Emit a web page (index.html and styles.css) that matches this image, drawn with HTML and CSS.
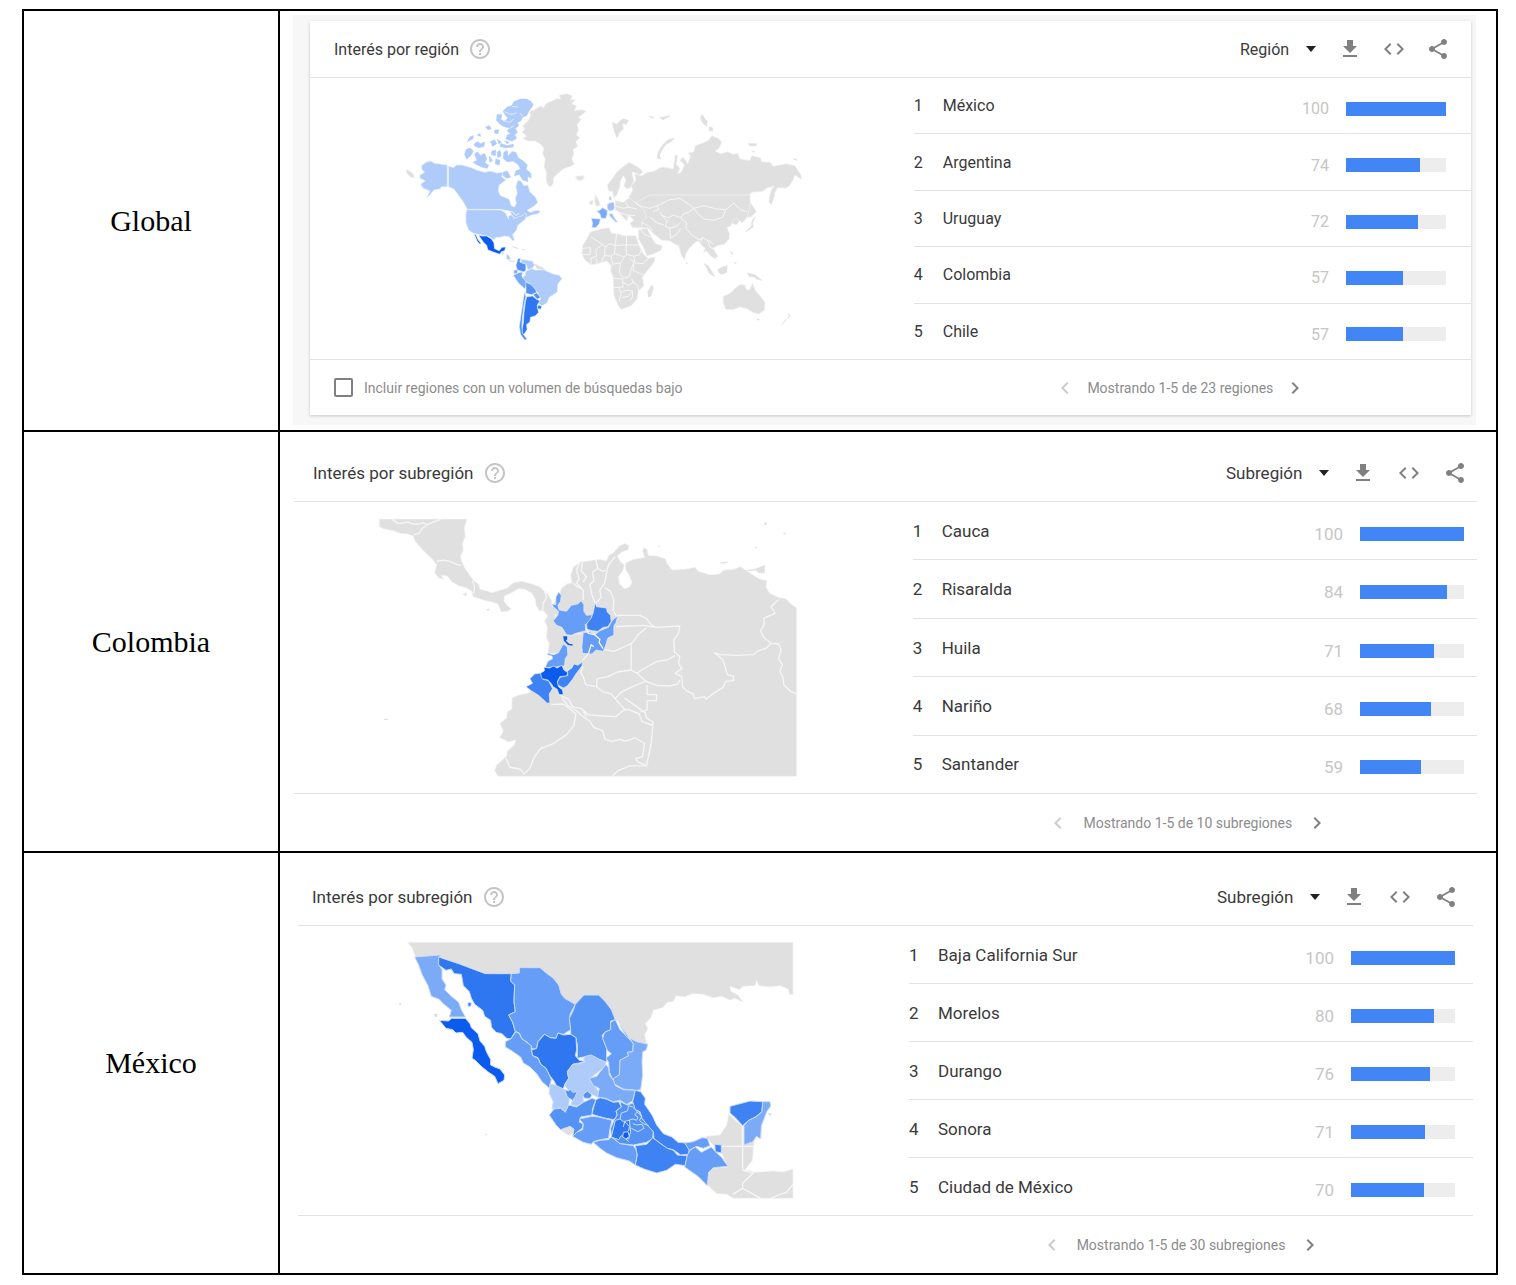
FILE: index.html
```html
<!doctype html>
<html lang="es">
<head>
<meta charset="utf-8">
<title>Interés por región y subregión</title>
<meta name="viewport" content="width=device-width,initial-scale=1">
<link rel="stylesheet" href="styles.css">
</head>
<body>

<!-- shared icons -->
<svg class="sprite" aria-hidden="true">
  <symbol id="i-help" viewBox="0 0 24 24"><path d="M11 18h2v-2h-2v2zm1-16C6.480 2 2 6.480 2 12s4.480 10 10 10 10-4.480 10-10S17.520 2 12 2zm0 18c-4.410 0-8-3.590-8-8s3.590-8 8-8 8 3.590 8 8-3.590 8-8 8zm0-14c-2.210 0-4 1.790-4 4h2c0-1.100.9-2 2-2s2 .9 2 2c0 2-3 1.750-3 5h2c0-2.250 3-2.500 3-5 0-2.210-1.790-4-4-4z"/></symbol>
  <symbol id="i-down" viewBox="0 0 10 6"><path d="M0 0h10L5 6z"/></symbol>
  <symbol id="i-download" viewBox="0 0 24 24"><path d="M19 9h-4V3H9v6H5l7 7 7-7zM5 18v2h14v-2H5z"/></symbol>
  <symbol id="i-code" viewBox="0 0 24 24"><path d="M9.400 16.600L4.800 12l4.600-4.600L8 6l-6 6 6 6 1.400-1.400zm5.200 0l4.600-4.600-4.600-4.600L16 6l6 6-6 6-1.400-1.400z"/></symbol>
  <symbol id="i-share" viewBox="0 0 24 24"><path d="M18 16.080c-.76 0-1.440.3-1.960.77L8.910 12.700c.05-.23.09-.46.09-.7s-.04-.47-.09-.7l7.050-4.110c.54.5 1.250.81 2.040.81 1.660 0 3-1.340 3-3s-1.340-3-3-3-3 1.340-3 3c0 .24.04.47.09.7L8.040 9.810C7.500 9.310 6.790 9 6 9c-1.660 0-3 1.340-3 3s1.340 3 3 3c.79 0 1.500-.31 2.040-.81l7.120 4.160c-.05.21-.08.43-.08.65 0 1.610 1.310 2.920 2.920 2.920s2.920-1.310 2.920-2.920-1.310-2.920-2.920-2.920z"/></symbol>
  <symbol id="i-prev" viewBox="0 0 24 24"><path d="M15.410 7.410L14 6l-6 6 6 6 1.410-1.410L10.830 12z"/></symbol>
  <symbol id="i-next" viewBox="0 0 24 24"><path d="M10 6L8.590 7.410 13.170 12l-4.580 4.590L10 18l6-6z"/></symbol>
</svg>

<table class="report">
  <tr>
    <th scope="row">Global</th>
    <td>
      <div class="frame">
      <section class="panel panel-global">
        <header class="panel-head">
          <h2>Interés por región</h2>
          <button type="button" class="icon help" aria-label="Ayuda"><svg><use href="#i-help"/></svg></button>
          <div class="picker">
            <select aria-label="Nivel"><option>Región</option></select>
            <svg class="caret"><use href="#i-down"/></svg>
          </div>
          <div class="tools">
            <button type="button" class="icon" aria-label="Descargar"><svg><use href="#i-download"/></svg></button>
            <button type="button" class="icon" aria-label="Insertar"><svg><use href="#i-code"/></svg></button>
            <button type="button" class="icon" aria-label="Compartir"><svg><use href="#i-share"/></svg></button>
          </div>
        </header>
        <div class="panel-body">
          <svg class="map world" viewBox="-240 -21 1812 843" role="img" aria-label="Mapa mundial">
            <!-- North America, arctic -->
            <g class="c2">
              <path d="M95 242L108 232 122 228 135 235 172 240V305L155 305 150 312 132 315 124 325 110 340 120 318 100 310 92 298 106 287 90 280 90 270 104 262 95 252Z"/>
              <path d="M176 243L190 248 200 240 215 240 230 244 245 248 262 256 285 262 300 258 322 264 340 262 335 275 348 285 328 300 325 318 332 332 358 343 364 362 374 366 379 356 376 340 382 325 378 305 384 285 395 290 402 302 414 300 420 320 436 335 444 352 434 362 412 376 420 382 440 376 452 378 445 386 425 390 408 398 396 394 384 404 372 398 358 378 330 373H232L220 350 205 330 192 312 176 305Z"/>
              <path class="isles" d="M230 192L242 190 250 198 242 212 230 222 224 208ZM254 208L262 200 272 212 284 205 290 222 284 234 296 240 292 250 276 246 262 240 250 232 262 226ZM306 198L318 196 316 212 304 208ZM318 222L330 226 328 240 316 236ZM322 202L330 196 334 212 324 218ZM342 202L352 196 354 214 366 200 378 202 384 218 400 228 412 240 408 252 422 264 424 278 412 274 414 290 398 284 388 268 374 272 378 258 392 252 386 240 370 228 352 230 340 220Z"/>
              <path class="isles" d="M232 170L240 156 250 152 248 162 238 166ZM252 178L262 170 272 176 284 172 282 184 266 188 256 184ZM288 126L298 122 304 130 294 134ZM314 136L326 134 324 146 314 144ZM262 150L270 146 272 154ZM302 170L314 164 320 176 308 184ZM330 184L334 176 352 182 370 178 370 186 346 188ZM340 262L352 258 362 276 350 280 340 272ZM322 162L334 172 328 178ZM262 222L276 226 288 236 268 238ZM298 214L308 226 300 232ZM344 168L358 172 352 176Z"/>
              <path class="isles" d="M340 78L352 66 366 62 372 50 392 42 410 42 424 50 430 60 418 76 410 92 398 96 392 108 382 112 386 122 376 130 382 142 374 150 380 160 366 168 348 162 352 150 362 146 352 138 360 128 346 126 334 120 320 106 322 88 336 90 332 104 346 108 354 98 346 90Z"/>
            </g>
            <path class="fjord" d="M344 80L362 88 380 84M338 106L358 112 372 102M360 130L372 122M366 64L384 66M398 94L390 84"/>
            <g class="c0">
              <path d="M486 48L500 40 512 42 508 30 530 26 548 32 542 44 556 44 546 56 560 62 554 76 576 74 590 78 576 90 566 96 574 104 562 118 566 134 560 150 570 158 558 170 564 184 550 194 552 206 546 222 554 238 538 246 520 252 504 266 492 276 490 296 482 306 472 298 468 280 470 262 462 246 466 222 458 206 462 190 450 176 436 168 412 168 398 160 410 154 396 142 404 134 398 122 414 108 422 92 418 80 434 74 452 62 460 68 472 52Z"/>
              <path d="M556 274L568 276 582 272 584 280 572 288 560 284ZM48 252L60 258 70 266 74 280 60 276 50 264Z"/>
            </g>
            <!-- Americas south of Canada -->
            <g transform="translate(0 345)">
              <path class="c2" d="M230 29L330 30 346 36 352 50 366 44 372 56 386 50 396 48 404 40 410 42 406 58 396 66 384 76 380 90 368 104 374 120 368 122 358 110 344 108 330 112 318 112 312 120 302 112 290 108 265 103 250 100 236 90 228 68 228 45Z"/>
              <path class="line" d="M340 34L352 40 356 58M352 38L366 34 378 46 388 40"/>
              <path class="c9" d="M266 106L278 108 290 108 304 116 312 128 314 146 328 152 336 142 348 141 344 152 334 156 330 163 312 157 294 150 290 136 280 126ZM253 103L258 104 264 118 273 130 270 133 262 124Z"/>
              <path class="c2" d="M348 164L358 166 362 178 352 180ZM334 156L342 158 338 164Z"/>
              <path class="c0 isles" d="M358 182L374 184 372 186ZM368 140L382 144 384 146ZM396 148L404 149 402 150ZM434 192L460 204 464 210 442 206Z"/>
              <path class="c6" d="M384 176L392 174 390 186 408 192 408 210 402 216 382 210 378 196Z"/>
              <path class="c2" d="M394 178L410 180 428 184 434 196 426 206 414 210 408 192 394 188Z"/>
              <path class="c4" d="M372 210L384 210 382 220 372 222Z"/>
              <path class="c4" d="M370 226L386 218 398 216 396 230 408 240 410 256 404 266 386 250Z"/>
              <path class="c2" d="M408 214L426 206 436 210 464 210 476 216 490 222 508 226 516 236 504 252 502 276 488 286 478 292 472 308 456 318 446 310 452 296 442 276 430 268 424 256 408 244 398 232 406 226Z"/>
              <path class="c6" d="M408 246L424 254 438 270 440 278 424 284 408 280ZM430 284L440 278 452 292 442 298Z"/>
              <path class="c8" d="M410 290L428 288 440 298 450 302 442 316 446 338 436 348 422 352 420 366 410 374 412 388 402 404 394 398 400 370 402 340 406 308Z"/>
              <path class="c6" d="M404 276L408 290 402 318 398 350 396 380 398 400 412 418 404 420 392 404 388 380 394 340 400 300Z"/>
              <path class="c8" d="M446 314L456 320 452 328 442 326Z"/>
            </g>
            <!-- Europe and Asia -->
            <g class="c0" transform="translate(540 0)">
              <path class="isles" d="M128 112L140 118 150 108 160 102 176 106 168 118 158 114 160 132 148 142 142 158 134 140ZM238 94L252 97 248 98ZM270 98L300 92 280 104ZM312 160L304 170 288 178 276 196 268 210 272 222 262 218 266 200 280 178 296 164ZM398 88L404 100 412 108 410 124 398 112 392 98ZM418 126L428 128 428 138 418 136ZM536 176L560 176 558 182 540 182ZM546 198L554 200 552 202ZM672 222L680 222 680 226Z"/>
              <path d="M112 300L128 280 140 262 158 246 178 232 190 238 210 250 220 262 208 270 194 262 186 262 192 288 184 306 172 312 162 304 168 284 160 272 152 288 150 306 142 330 132 338 128 320 116 318Z"/>
              <path d="M194 266L216 272 232 262 254 258 270 248 280 246 294 248 310 252 316 208 324 212 320 238 330 250 324 266 334 262 344 240 330 226 340 216 354 236 362 212 354 204 372 200 376 182 398 174 416 166 426 152 446 160 456 172 448 190 436 198 452 206 474 200 490 208 504 204 510 222 540 226 546 212 572 218 576 230 602 232 610 244 650 236 676 242 694 270 696 284 676 270 670 284 660 302 648 310 624 308 616 322 606 362 598 340 604 316 612 304 594 308 576 320 546 322 536 334 542 352 560 380 544 396 516 400 500 420 470 410 440 410 402 412 380 400 340 392 300 400 284 416 250 408 240 390 220 376 196 376 180 360 176 338 188 316 184 302 198 286Z"/>
              <path d="M76 328L86 344 92 362 78 364 74 350ZM60 348L70 346 68 360 58 358ZM18 274L42 272 38 284 24 286Z"/>
            </g>
            <g transform="translate(540 330)">
              <g class="c0">
                <path d="M136 16L160 22 178 8 196 22 222 34 240 40 250 60 236 68 246 88 262 98 252 108 236 100 212 98 188 98 180 84 192 76 176 60 172 78 162 70 148 52 136 44Z"/>
                <path d="M196 24L240 0H540L542 24 538 44 530 70 518 84 500 70 490 76 484 92 472 98 480 118 478 132 464 148 444 152 430 160 444 184 436 192 424 184 410 168 400 174 406 160 394 150 386 138 374 144 358 160 348 178 344 196 334 180 326 152 312 146 300 138 276 136 258 122 246 112 232 96 218 100 214 82 230 66 222 44Z"/>
                <path d="M206 104L232 100 246 128 258 146 278 152 274 166 248 178 232 184 220 156 206 132Z"/>
                <path d="M62 110L92 102 118 98 124 114 150 118 162 122 198 122 208 152 220 176 234 190 256 186 254 200 232 228 218 246 222 272 206 288 202 312 184 332 154 344 146 334 132 300 130 246 122 228 124 212 110 198 84 206 64 210 46 196 36 178 38 152 52 130Z"/>
                <path class="isles" d="M246 270L250 278 244 302 236 306 234 290ZM350 202L353 206 350 206ZM404 206L416 214 434 244 420 236ZM446 222L460 216 472 212 470 232 456 238 446 232ZM482 168L488 174 487 180ZM492 202L500 206ZM534 234L556 240 566 248 576 256 560 252 554 246 538 244ZM556 66L548 84 550 96 528 110 532 106 546 92 546 78ZM604 0L614 0 602 26 598 20Z"/>
                <path d="M460 304L482 294 500 276 512 268 526 270 530 284 540 284 548 264 558 288 572 304 586 322 584 346 566 358 548 352 532 342 512 336 490 344 468 344 460 324Z"/>
                <path class="isles" d="M562 372L569 373 566 377ZM656 356L660 362 654 370 658 364ZM650 372L644 380 636 388Z"/>
              </g>
              <path class="line" d="M196 22L214 34 240 40 262 32 266 44 250 50M262 32L300 14 330 10 358 28 372 40 356 52 340 58 332 68 310 60 296 68 276 62 272 50M372 40L402 32 440 42 468 44 460 66 432 76 402 72 384 56 372 40M468 44L492 24 512 44 530 50M332 68L350 84 348 100 368 122 388 134 398 128 414 136 430 146M276 62L292 78 286 94 300 100 320 94 332 82M300 100L302 130 320 118 334 100M240 66L262 84 282 90M214 82L236 92 248 108M168 20L174 36 202 42M140 34L160 40 178 36M148 52L170 60 196 62M398 128L392 142M414 136L420 156 432 162M212 104L224 118 242 126"/>
              <path class="line" d="M64 126L98 148 106 156 120 146 136 152 140 118M136 152L166 150H206M170 122V152M98 148L78 164 80 184 60 190M106 156L104 182 92 206M104 182L124 184 134 176 136 152M134 176L164 186 170 178 168 150M170 178L192 184 208 180 214 164M124 184L128 208 152 204 164 186M152 204L148 232 160 250 178 246 184 222 192 200 178 190M192 184L196 204 220 206 236 190M192 204L190 226 220 240M132 250L158 252 160 276 132 278M160 262L176 272 190 262 186 250M148 278L154 296 148 320M154 292L172 286 188 288 176 304 156 308M190 262L204 272 206 288M40 160L62 158 60 180 38 178M64 190V210M78 190L82 206M188 288V306L180 318"/>
              <path class="c4" d="M80 48L90 46 98 38 112 46 112 58 108 70 94 70 90 56Z"/>
              <path class="c4" d="M64 70L92 72 88 86 78 98 66 98 68 84Z"/>
              <path class="c3" d="M112 28L124 22 132 22 134 38 130 46 118 48 112 40ZM116 56L128 56 134 70 144 80 138 82 122 66ZM118 4L124 6 124 16 118 14Z"/>
            </g>
          </svg>
          <ol class="ranking">
            <li><span class="rank">1</span><span class="name">México</span><span class="value">100<span class="bar"><span style="width:100%"></span></span></span></li>
            <li><span class="rank">2</span><span class="name">Argentina</span><span class="value">74<span class="bar"><span style="width:74%"></span></span></span></li>
            <li><span class="rank">3</span><span class="name">Uruguay</span><span class="value">72<span class="bar"><span style="width:72%"></span></span></span></li>
            <li><span class="rank">4</span><span class="name">Colombia</span><span class="value">57<span class="bar"><span style="width:57%"></span></span></span></li>
            <li><span class="rank">5</span><span class="name">Chile</span><span class="value">57<span class="bar"><span style="width:57%"></span></span></span></li>
          </ol>
        </div>
        <footer class="panel-foot">
          <label class="low-volume"><input type="checkbox">Incluir regiones con un volumen de búsquedas bajo</label>
          <div class="pager">
            <button type="button" class="icon" aria-label="Anterior" disabled><svg><use href="#i-prev"/></svg></button>
            <span>Mostrando 1-5 de 23 regiones</span>
            <button type="button" class="icon" aria-label="Siguiente"><svg><use href="#i-next"/></svg></button>
          </div>
        </footer>
      </section>
      </div>
    </td>
  </tr>
  <tr>
    <th scope="row">Colombia</th>
    <td>
      <section class="panel panel-colombia">
        <header class="panel-head">
          <h2>Interés por subregión</h2>
          <button type="button" class="icon help" aria-label="Ayuda"><svg><use href="#i-help"/></svg></button>
          <div class="picker">
            <select aria-label="Nivel"><option>Subregión</option></select>
            <svg class="caret"><use href="#i-down"/></svg>
          </div>
          <div class="tools">
            <button type="button" class="icon" aria-label="Descargar"><svg><use href="#i-download"/></svg></button>
            <button type="button" class="icon" aria-label="Insertar"><svg><use href="#i-code"/></svg></button>
            <button type="button" class="icon" aria-label="Compartir"><svg><use href="#i-share"/></svg></button>
          </div>
        </header>
        <div class="panel-body">
          <svg class="map" viewBox="-228 -24 1857 873" role="img" aria-label="Mapa de Colombia">
            <path class="c0" d="M28 27H291L284 52 286 80 278 100 280 122 272 138 276 156 286 176 300 196 312 212 326 222 330 238 350 242 366 248 392 240 412 234 430 218 456 214 486 222 510 230 524 244 536 256 545 270 548 292 556 270 570 250 574 236 590 222 606 218 602 196 610 172 630 156 650 154 672 150 690 148 710 152 716 136 730 128 748 108 764 100 778 106 774 120 756 126 742 138 750 152 764 166 758 184 746 200 750 222 764 236 780 230 786 216 778 196 768 180 766 160 790 148 824 142 818 124 822 112 832 118 836 136 862 138 886 146 894 164 908 180 942 178 976 172 986 184 1020 194 1048 192 1062 180 1090 178 1112 170 1134 184 1152 196 1168 206 1192 212 1188 230 1200 250 1226 262 1248 266 1264 282 1281 294V799H384L374 782 380 766 410 738 412 724 432 706 438 690 414 696 396 686 388 684 400 664 390 640 410 624 412 606 426 596 426 564 444 556 478 548 500 520 530 470 560 430 534 430 538 400 530 384 532 350 524 332 534 318 518 300 510 304 498 286 496 268 486 250 466 238 446 236 426 248 404 258 402 274 424 298 412 304 394 306 384 282 366 276 346 272 322 264 310 262 306 244 290 234 268 228 246 216 232 198 214 196 222 208 206 204 194 188 200 164 188 148 166 128 152 112 134 92 130 78 112 72 90 70 70 62 40 56 28 50Z"/>
            <path class="c0 isles" d="M1130 182L1160 176 1184 166 1184 188 1166 188 1160 180ZM1052 158L1074 156 1062 160ZM1185 38H1189V44H1185ZM1158 111H1161V113H1158ZM1242 69H1247V71H1242ZM280 252L290 250 288 258ZM42 628H54V629H42ZM351 298H357V300H351ZM867 108H870V109H867Z"/>
            <path class="line" d="M66 28L84 40 116 36 130 42 148 42 160 38 172 44 190 36 212 28M172 44L156 56 148 70 132 74M200 154L220 150 240 154 260 162 274 166M308 212L314 230 312 250M524 244L530 262 520 280 518 300M630 156L620 180 628 206 620 220 640 240 640 270M610 220L622 230 634 236M638 156L634 182 650 200 640 216M678 150L684 176 668 186 672 212 660 224 666 254 676 280M736 140L716 164 710 190 704 220 690 240 694 262 678 280M684 176L700 184 708 180M704 232L722 244 732 270 730 300 740 320M742 316H810L830 326 840 340 856 352 930 348 926 370 912 390 914 426 930 440 926 460 936 476 916 490 936 500 938 530 952 544 970 552 974 566 1004 560 1008 568 1034 548 1060 532 1068 514 1092 512 1090 498 1072 494 1066 470 1058 448 1034 428 1050 434 1100 436 1150 434 1162 424 1190 414 1204 400 1182 382 1172 362 1184 344 1182 324 1216 310 1204 290 1228 268M1204 400L1226 402 1234 420 1226 446 1238 464 1230 484 1240 504 1242 524 1262 544 1281 552M738 350L780 348 824 346 856 352M830 354L806 372 788 398 768 408 732 424 704 418M784 402V480L802 490 814 480 862 454 892 450 916 436M784 480L742 486 714 500 682 506 680 530 700 546 724 552 736 566 764 598M802 490L828 514 806 522 776 536 752 548 736 566M828 514L860 526 900 528 924 522 930 510M640 470L632 486 640 500 648 524 676 530M832 526V554H860V572H832V600L812 606M764 564L800 590 826 608 830 624 850 636 848 646 816 634 808 612 776 598 762 600 738 620 700 618 656 614 634 596 608 590 596 568 564 552M576 564L596 588 620 602 640 620 660 634 672 652 698 662 706 688 724 694 752 688 766 694 796 684 824 700 818 740 798 746 804 756 824 764 830 770M850 640L844 700 830 768 780 768 744 782 728 798M544 584L580 582 604 600 618 612 612 646 590 674 552 700 512 716 492 744 480 776 462 792 452 778 420 772 408 744M650 620L640 604M594 372L636 370M556 312L560 346"/>
            <path class="c5" d="M566 246L574 256 572 274 564 286 568 300 590 304 604 286 624 282 634 272 642 284 642 304 650 316 668 314 660 332 646 344 648 362 618 370 604 376 590 374 576 352 560 346 550 332 564 316 566 304 550 290 546 282 558 284 558 262Z"/>
            <path class="c7" d="M676 278L680 290 710 294 712 306 722 316 724 334 714 350 700 352 684 364 668 362 652 358 650 342 664 324 670 308Z"/>
            <path class="c5" d="M744 318L738 338 732 348 732 376 714 384 706 410 700 424 678 420 666 432 638 430 636 412 640 368 660 366 676 374 690 362 716 352 728 330Z"/>
            <path class="line" d="M648 356L656 370 674 374 690 388 688 398 700 416M656 430L664 404 672 410"/>
            <path class="c9 tiny" d="M580 379H592V388L588 392 598 401 608 403 608 407 594 405 582 392Z"/>
            <path class="c5" d="M580 402L592 410 594 434 586 446 584 468 572 468 556 472 526 472 534 454 548 446 546 438 532 434 534 430 552 434 566 428Z"/>
            <path class="c7" d="M638 456L636 468 618 492 608 508 592 528 580 534 560 522 570 502 594 496 592 484 606 474 612 462 624 466Z"/>
            <path class="c7" d="M520 488L494 492 480 506 488 520 468 530 484 542 506 556 524 572 532 580 540 578 538 552 548 536 536 512 520 508Z"/>
            <path class="c9" d="M522 472L540 474 550 468 562 474 576 466 582 480 594 488 590 498 570 500 562 516 566 530 578 540 580 554 568 554 562 538 550 530 542 518 534 510 516 506 512 490 524 482Z"/>
            <path class="line" d="M638 452L656 430"/>
          </svg>
          <ol class="ranking">
            <li><span class="rank">1</span><span class="name">Cauca</span><span class="value">100<span class="bar"><span style="width:100%"></span></span></span></li>
            <li><span class="rank">2</span><span class="name">Risaralda</span><span class="value">84<span class="bar"><span style="width:84%"></span></span></span></li>
            <li><span class="rank">3</span><span class="name">Huila</span><span class="value">71<span class="bar"><span style="width:71%"></span></span></span></li>
            <li><span class="rank">4</span><span class="name">Nariño</span><span class="value">68<span class="bar"><span style="width:68%"></span></span></span></li>
            <li><span class="rank">5</span><span class="name">Santander</span><span class="value">59<span class="bar"><span style="width:59%"></span></span></span></li>
          </ol>
        </div>
        <footer class="panel-foot">
          <div class="pager">
            <button type="button" class="icon" aria-label="Anterior" disabled><svg><use href="#i-prev"/></svg></button>
            <span>Mostrando 1-5 de 10 subregiones</span>
            <button type="button" class="icon" aria-label="Siguiente"><svg><use href="#i-next"/></svg></button>
          </div>
        </footer>
      </section>
    </td>
  </tr>
  <tr>
    <th scope="row">México</th>
    <td>
      <section class="panel panel-mexico">
        <header class="panel-head">
          <h2>Interés por subregión</h2>
          <button type="button" class="icon help" aria-label="Ayuda"><svg><use href="#i-help"/></svg></button>
          <div class="picker">
            <select aria-label="Nivel"><option>Subregión</option></select>
            <svg class="caret"><use href="#i-down"/></svg>
          </div>
          <div class="tools">
            <button type="button" class="icon" aria-label="Descargar"><svg><use href="#i-download"/></svg></button>
            <button type="button" class="icon" aria-label="Insertar"><svg><use href="#i-code"/></svg></button>
            <button type="button" class="icon" aria-label="Compartir"><svg><use href="#i-share"/></svg></button>
          </div>
        </header>
        <div class="panel-body">
          <svg class="map" viewBox="-276 -27 1833 867" role="img" aria-label="Mapa de México">
            <!-- neighbours -->
            <path class="c0" d="M52 22H1209V180L1198 178 1194 162 1170 152 1140 156 1106 152 1100 136 1096 152 1060 154 1048 164 1020 154 1022 168 1044 180 1060 202 1034 190 1020 196 996 184 970 188 938 178 906 176 884 186 858 182 850 200 832 202 818 218 790 226 784 246 766 266 774 280 764 300 772 330 740 326 710 310 690 270 660 230 640 200 620 180H590L556 208 520 190 500 150 450 98H388V116H286L150 66 76 64 66 38Z"/>
            <path class="c0" d="M1016 536L1036 556 1056 572V634L1060 630 1094 614 1090 640 1088 676 1062 708 1078 706 1092 712 1150 708 1180 710 1209 702V790H1030L1010 778 980 776 962 760 952 748 960 700 1014 696 994 654 966 626 946 604 990 600 1010 570ZM512 586L540 572 554 580 550 594 536 602Z"/>
            <path class="c0 isles" d="M28 204L33 206 30 210ZM286 598H291V599H286Z"/>
            <path class="line" d="M1058 560V634M996 634H1090M1058 634V706M1058 706L1074 710 1090 714 1058 744V760L1112 790M1058 760L1028 778M1142 790L1170 778 1190 772 1209 748"/>
            <!-- states -->
            <g class="states">
            <path class="c4" d="M74 66L150 60 148 92 156 104 156 132 168 150 164 164 184 184 206 202 214 224 226 246H178L184 226 160 206 146 192 124 184 114 152 96 118 86 90ZM134 238H140L138 246Z"/>
            <path class="c9" d="M148 256L176 258 184 250H226L240 266 244 278 264 296 270 318 284 334 290 352 302 374 302 390 314 396 330 402 344 420 342 436 324 446 314 424 296 412 276 396 256 376 246 370 250 344 246 322 228 306 218 292 198 294 188 284 168 280Z"/>
            <path class="c8" d="M146 66L206 86 286 116H364L362 138 374 150 372 200 376 230 356 240 368 262 376 290 362 312 350 310 336 296 318 292 304 276 302 256 284 244 278 226 254 208 244 190 238 170 220 152 214 118 192 116 184 102 168 106 146 90ZM234 202L244 204 242 214 234 214Z"/>
            <path class="c5" d="M364 116L388 114V98H450L466 112 490 130 506 150 514 178 524 190 556 208 540 238V260L542 284 520 298 504 294 498 310 480 308 464 298 456 304 444 320 440 340 428 342 412 322 396 312 388 294 376 290 368 262 356 240 376 230 372 200 374 150 362 138Z"/>
            <path class="c6" d="M556 208L582 180H626L646 200 664 224 676 254 662 258 662 284 644 292 636 302 650 340 650 382 620 370 604 362 580 366 562 370V330L558 308 542 298V284L538 250 550 226Z"/>
            <path class="c5" d="M676 254L690 284 712 306 730 326 728 350 712 352 716 362 690 376V400L688 420 668 434 658 410 656 382 648 370 664 356 652 346 638 310 644 292 662 284 662 262Z"/>
            <path class="c4" d="M690 270L708 304 740 320 774 328 768 346 758 350 756 380 758 420 752 464 738 466 700 462 672 446 670 430 688 420 690 376 716 362 712 352 728 350 730 326Z"/>
            <path class="c8" d="M464 298L480 308 498 310 504 294 520 300 542 298 558 308 560 344 556 362 568 376 586 380 548 388 532 410 536 430 524 448 520 462 500 454 492 438 478 420 468 400 452 388 444 368 428 362 424 346 440 340 444 320Z"/>
            <path class="c5" d="M346 320L362 312 378 290 388 296 396 312 424 332 424 346 428 362 444 370 452 388 468 400 478 420 484 434 478 460 456 440 440 416 420 396 400 384 392 366 366 348 346 336Z"/>
            <path class="c2" d="M586 364L604 360 622 370 648 382 640 398 620 414 600 430 606 446 618 460 630 476 622 486 606 478 592 470 578 480 580 500 560 514 542 508 550 492 530 480 534 462 524 452 536 430 532 410 548 388 568 386 586 380 580 374Z"/>
            <path class="c4" d="M648 388L656 400 658 420 670 436 676 452 700 464 736 466 728 498 710 508 690 496 670 500 646 490 622 486 628 460 610 452 598 430 620 424Z"/>
            <path class="c2" d="M480 446L500 452 524 464 530 482 538 492 536 510 526 530 512 518 486 522 490 500 478 476Z"/>
            <path class="c6" d="M524 464L536 468 540 462 548 472 562 470 556 484 548 496 532 486ZM578 480L592 468 606 480 600 490 584 490Z"/>
            <path class="c6" d="M478 540L492 522 512 520 526 532 536 510 560 516 580 502 606 490 618 494 608 520 606 540 572 546 568 562 580 566 576 580 558 594 548 604 552 582 540 574 512 584 498 570Z"/>
            <path class="c5" d="M548 604L560 592 578 584 580 566 568 552 606 544 626 546 650 552 666 556 660 580 656 610 630 614 610 620 604 628 580 622Z"/>
            <path class="c7" d="M618 494L630 488 648 492 670 502 686 500 694 516 678 528 682 540 672 554 648 550 626 544 606 538 610 520Z"/>
            <path class="c6" d="M690 500L712 510 730 504 748 532 760 556 780 568 790 590 788 610 770 622 730 630 690 626 664 606 662 580 672 556 682 540 678 528 694 516Z"/>
            <path class="c8" d="M676 556L690 552 700 560 718 556 722 590 716 612 694 602 686 614 664 606Z"/>
            <path class="c9" d="M700 592L714 590 718 604 708 612 698 606Z"/>
            <path class="c5" d="M610 622L630 616 656 614 664 606 690 626 730 632 742 650 740 670 736 690 718 678 680 668 650 654 630 640Z"/>
            <path class="c7" d="M736 466L752 470 766 490 764 508 786 540 800 570 820 596 846 606 864 622 892 624 898 636 896 658 872 660 850 644 830 640 812 626 792 612 790 590 772 570 756 550 750 530 736 524 728 500Z"/>
            <path class="c7" d="M736 632L770 628 788 608 812 626 832 640 850 646 862 660 892 662 886 692 856 688 830 706 800 714 762 702 736 690 742 660Z"/>
            <path class="c5" d="M884 624L910 620 936 608 952 610 960 632 940 640 920 634 898 646Z"/>
            <path class="c5" d="M892 660L900 646 916 636 934 652 964 636 980 654 994 666 1014 694 970 698 956 712 952 752 924 724 884 696Z"/>
            <path class="c7" d="M974 628L994 630V654L976 650Z"/>
            <path class="c7" d="M1020 514L1050 506 1080 498 1118 500 1116 530 1096 546 1076 556 1058 572 1036 548 1020 534Z"/>
            <path class="c4" d="M1118 500H1140L1142 514 1130 530 1122 552 1114 572 1112 612 1100 604 1088 620 1062 630V572L1076 556 1098 546 1116 530ZM1136 536H1142V542Z"/>
            <path class="line" d="M690 552L694 534 712 528 716 512 728 516 742 530 734 540 744 546 740 556 728 552 716 556M728 566L740 570 756 568 762 580 744 590 724 580M740 530L756 544 748 556 760 566 776 572M700 576L704 560 718 574 716 588M708 612L716 620"/>
            </g>
          </svg>
          <ol class="ranking">
            <li><span class="rank">1</span><span class="name">Baja California Sur</span><span class="value">100<span class="bar"><span style="width:100%"></span></span></span></li>
            <li><span class="rank">2</span><span class="name">Morelos</span><span class="value">80<span class="bar"><span style="width:80%"></span></span></span></li>
            <li><span class="rank">3</span><span class="name">Durango</span><span class="value">76<span class="bar"><span style="width:76%"></span></span></span></li>
            <li><span class="rank">4</span><span class="name">Sonora</span><span class="value">71<span class="bar"><span style="width:71%"></span></span></span></li>
            <li><span class="rank">5</span><span class="name">Ciudad de México</span><span class="value">70<span class="bar"><span style="width:70%"></span></span></span></li>
          </ol>
        </div>
        <footer class="panel-foot">
          <div class="pager">
            <button type="button" class="icon" aria-label="Anterior" disabled><svg><use href="#i-prev"/></svg></button>
            <span>Mostrando 1-5 de 30 subregiones</span>
            <button type="button" class="icon" aria-label="Siguiente"><svg><use href="#i-next"/></svg></button>
          </div>
        </footer>
      </section>
    </td>
  </tr>
</table>

</body>
</html>
```
FILE: styles.css
```css
* { box-sizing:border-box; }
body {
  margin:0;
  padding:9px 18px 0 22px;
  background:#fff;
  color:#3a3a3a;
  font-family:Roboto, "Liberation Sans", sans-serif;
  font-size:16px;
}
.sprite { display:none; }

/* outer table */
.report {
  width:100%;
  border-collapse:collapse;
}
.report th, .report td {
  padding:0;
  border:2px solid #000;
}
.report th {
  width:256px;
  font:normal 30px "Liberation Serif", serif;
  color:#000;
}
.report td { vertical-align:top; }

/* panels */
.frame {
  margin:4px 20px 5px 13px;
  padding:6px 5px 10px 17px;
  background:#f7f7f7;
}
.panel {
  --split:52%;
  --head:58px;
  --body:292px;
  --foot:57px;
  --edge:10px;
  --bar-edge:13px;
  --bar:104px;
  --pager-shift:14px;
  --pager-gap:13px;
  --tool-gap:22px;
  --inset:19px;
  font-size:17px;
}
.panel-global {
  --head:57px;
  --body:282px;
  --foot:55px;
  --edge:21px;
  --bar-edge:25px;
  --bar:100px;
  --pager-shift:24px;
  --pager-gap:10px;
  --tool-gap:20px;
  --inset:24px;
  background:#fff;
  box-shadow:0 1px 3px rgba(0,0,0,.2);
  font-size:16px;
}
.panel-colombia {
  --split:52.3%;
  margin:12px 19px 0 14px;
}
.panel-mexico {
  --body:290px;
  --edge:15px;
  --bar-edge:18px;
  --pager-shift:20px;
  --inset:14px;
  margin:15px 23px 0 18px;
}

.panel-head {
  display:flex;
  align-items:center;
  height:var(--head);
  padding:0 var(--edge) 0 var(--inset);
  border-bottom:1px solid #e3e3e3;
}
.panel-head h2 {
  margin:0;
  font-size:inherit;
  font-weight:400;
}
.icon {
  width:24px;
  height:24px;
  padding:0;
  border:0;
  background:none;
  color:#808080;
}
.icon svg { display:block; width:24px; height:24px; fill:currentColor; }
.icon:disabled { color:#ccc; }
.help { margin-left:9px; color:#c4c4c4; }
.picker {
  display:flex;
  align-items:center;
  gap:16px;
  margin-left:auto;
}
.picker select {
  appearance:none;
  padding:0;
  border:0;
  background:none;
  color:inherit;
  font:inherit;
}
.caret { width:10px; height:6px; fill:#222; }
.tools { display:flex; gap:var(--tool-gap); margin-left:22px; }

.panel-body {
  display:grid;
  grid-template-columns:var(--split) 1fr;
  height:var(--body);
  border-bottom:1px solid #e3e3e3;
}
.map { display:block; width:100%; height:100%; }
.ranking {
  display:flex;
  flex-direction:column;
  margin:0;
  padding:0;
  list-style:none;
}
.ranking li {
  flex:1;
  display:flex;
  align-items:center;
  padding-right:var(--bar-edge);
}
.ranking li + li { border-top:1px solid #e3e3e3; }
.rank { width:29px; }
.value {
  display:flex;
  align-items:center;
  gap:17px;
  margin-left:auto;
  padding-top:6px;
  color:#c6c6c6;
}
.bar { width:var(--bar); height:14px; background:#ededed; }
.bar span { display:block; height:100%; background:#4285f4; }

.panel-foot {
  display:grid;
  grid-template-columns:var(--split) 1fr;
  align-items:center;
  height:var(--foot);
  color:#8c8c8c;
  font-size:14px;
}
.low-volume {
  display:flex;
  align-items:center;
  gap:11px;
  padding-left:var(--inset);
}
.low-volume input {
  appearance:none;
  width:19px;
  height:19px;
  margin:0;
  border:2px solid #808080;
  border-radius:2px;
}
.pager {
  grid-column:2;
  display:flex;
  align-items:center;
  justify-content:center;
  gap:var(--pager-gap);
  padding-right:var(--pager-shift);
}

/* map shades, light to dark */
.map path { stroke:#e6effc; stroke-width:2; stroke-linejoin:round; }
.map path.c0, .map .c0 path { stroke:#f4f4f4; }
.map .states path { stroke:#c9dcfb; stroke-width:3; }
.map .line { fill:none; stroke:#f6f6f6; stroke-width:4; }
.map .states .line { stroke-width:3; }
.map.world .line { stroke-width:3; }
.map .c2 .isles { stroke:#aecbfa; }
.map .c0 .isles, .map .c0.isles { stroke:#e0e0e0; }
.map .tiny { stroke:none; }
.map .fjord { fill:none; stroke:#fff; }
.c0 { fill:#e0e0e0; }
.c2 { fill:#aecbfa; }
.c3 { fill:#a0c0f8; }
.c4 { fill:#7baaf7; }
.c5 { fill:#669df6; }
.c6 { fill:#5492f3; }
.c7 { fill:#3f82f3; }
.c8 { fill:#2f77f0; }
.c9 { fill:#0b5cee; }
```
